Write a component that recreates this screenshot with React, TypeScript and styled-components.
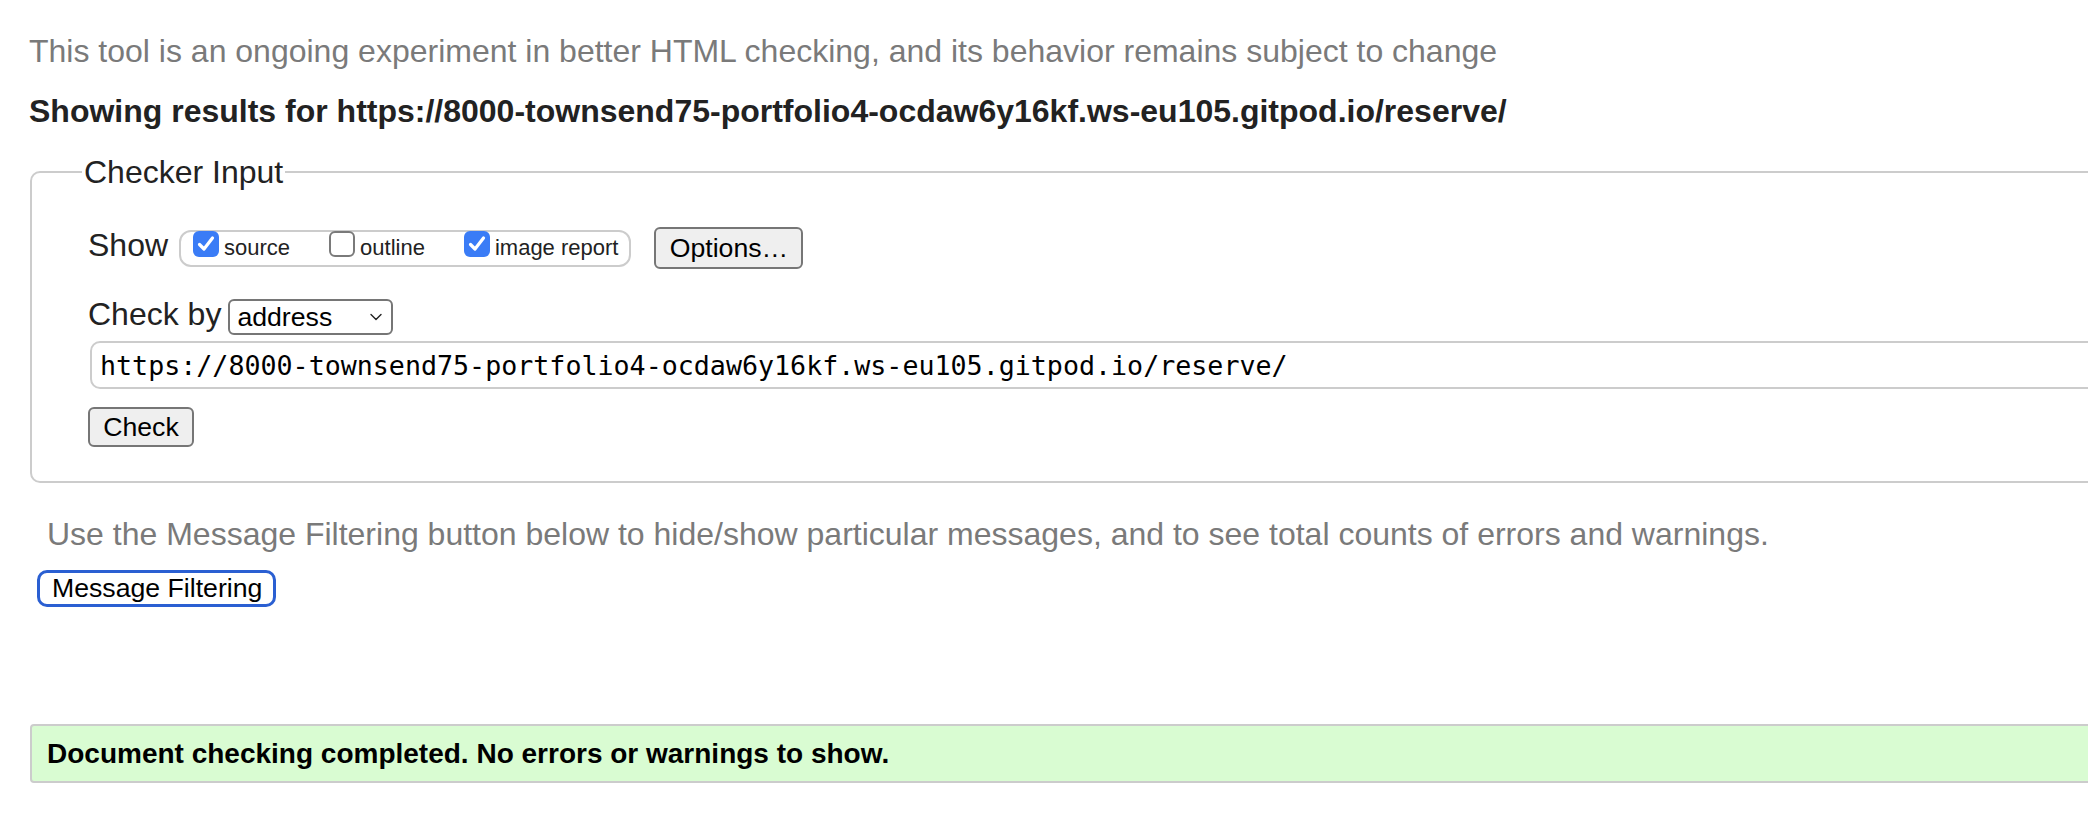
import React from "react";
import styled, { createGlobalStyle } from "styled-components";

const GlobalStyle = createGlobalStyle`
  html, body {
    margin: 0;
    padding: 0;
    overflow: hidden;
    background: #fff;
  }
  body {
    font-family: "Liberation Sans", Arial, Helvetica, sans-serif;
  }
`;

const Page = styled.div`
  width: 2400px;
  box-sizing: border-box;
  padding-left: 29px;
`;

const Intro = styled.p`
  margin: 33px 0 0;
  font-size: 32px;
  line-height: 36px;
  color: #7a7a7a;
`;

const Heading = styled.h2`
  margin: 24px 0 0;
  font-size: 32px;
  line-height: 36px;
  font-weight: bold;
  color: #222;
`;

const Fieldset = styled.fieldset`
  margin: 25px 0 0 1px;
  border: 2px solid #ccc;
  border-radius: 10px;
  padding: 37px 0 34px 56px;
  min-width: 0;
`;

const Legend = styled.legend`
  font-size: 32px;
  line-height: 36px;
  color: #222;
  padding: 0 2px;
  margin-left: -6px;
`;

const Row = styled.div<{ $top?: number }>`
  display: flex;
  align-items: flex-start;
  margin-top: ${(p) => p.$top ?? 0}px;
`;

const RowLabel = styled.span<{ $gap: number }>`
  font-size: 32px;
  line-height: 36px;
  color: #222;
  margin-right: ${(p) => p.$gap}px;
  white-space: nowrap;
`;

const CheckGroup = styled.div`
  display: flex;
  align-items: flex-start;
  gap: 39px;
  height: 37px;
  box-sizing: border-box;
  margin-top: 3px;
  border: 2px solid #ccc;
  border-radius: 12px;
  padding: 0 11px 0 12px;
`;

const CheckItem = styled.label`
  display: flex;
  align-items: flex-start;
  gap: 5px;
`;

const Box = styled.span<{ $checked: boolean }>`
  display: flex;
  align-items: center;
  justify-content: center;
  width: 26px;
  height: 26px;
  margin-top: -1px;
  box-sizing: border-box;
  border-radius: 6px;
  background: ${(p) => (p.$checked ? "#3a7cf6" : "#fff")};
  border: ${(p) => (p.$checked ? "none" : "2px solid #7a7a7a")};
`;

const CheckText = styled.span`
  font-size: 22px;
  line-height: 26px;
  margin-top: 3px;
  color: #222;
  white-space: nowrap;
`;

const Button = styled.button<{ $w: number; $h: number; $left?: number; $top?: number }>`
  width: ${(p) => p.$w}px;
  height: ${(p) => p.$h}px;
  margin-left: ${(p) => p.$left ?? 0}px;
  margin-top: ${(p) => p.$top ?? 0}px;
  box-sizing: border-box;
  padding: 0;
  background: #efefef;
  border: 2px solid #767676;
  border-radius: 6px;
  font-family: "Liberation Sans", Arial, sans-serif;
  font-size: 26.67px;
  color: #000;
  display: flex;
  align-items: center;
  justify-content: center;
`;

const SelectBox = styled.div`
  display: flex;
  align-items: center;
  justify-content: space-between;
  width: 165px;
  height: 36px;
  margin-top: 3px;
  box-sizing: border-box;
  border: 2px solid #767676;
  border-radius: 6px;
  padding: 0 9px 0 7px;
  background: #fff;
  font-size: 26.67px;
  color: #000;
`;

const UrlInput = styled.div`
  display: flex;
  align-items: center;
  height: 48px;
  margin: 6px 0 0 2px;
  box-sizing: border-box;
  border: 2px solid #ccc;
  border-radius: 10px;
  padding-left: 8px;
  font-family: "DejaVu Sans Mono", "Liberation Mono", monospace;
  font-size: 26.67px;
  color: #000;
  white-space: nowrap;
`;

const FilterNote = styled.p`
  margin: 33px 0 0 18px;
  font-size: 32px;
  line-height: 36px;
  color: #7a7a7a;
`;

const FocusButton = styled.button`
  display: flex;
  align-items: center;
  width: 239px;
  height: 37px;
  margin: 18px 0 0 8px;
  box-sizing: border-box;
  padding: 0 0 0 12px;
  background: #fff;
  border: 3px solid #2a5fd2;
  border-radius: 10px;
  font-family: "Liberation Sans", Arial, sans-serif;
  font-size: 26.67px;
  color: #000;
`;

const SuccessBox = styled.div`
  display: flex;
  align-items: center;
  height: 59px;
  margin: 117px 0 0 1px;
  box-sizing: border-box;
  border: 2px solid #ccc;
  border-radius: 4px;
  padding-left: 15px;
  background: #d9fcd2;
  font-size: 28px;
  font-weight: bold;
  color: #000;
`;

const Tick = () => (
  <svg width="20" height="20" viewBox="0 0 20 20">
    <path d="M3.5 10.5 L8 15 L16.5 4" fill="none" stroke="#fff" strokeWidth="3.2" strokeLinecap="round" strokeLinejoin="round" />
  </svg>
);

const Chevron = () => (
  <svg width="12" height="8" viewBox="0 0 12 8">
    <path d="M1 1.5 L6 6.5 L11 1.5" fill="none" stroke="#222" strokeWidth="1.4" strokeLinecap="round" strokeLinejoin="round" />
  </svg>
);

const Check = ({ checked, label }: { checked: boolean; label: string }) => (
  <CheckItem>
    <Box $checked={checked}>{checked && <Tick />}</Box>
    <CheckText>{label}</CheckText>
  </CheckItem>
);

export default function App() {
  return (
    <>
      <GlobalStyle />
      <Page>
        <Intro>This tool is an ongoing experiment in better HTML checking, and its behavior remains subject to change</Intro>
        <Heading>Showing results for https://8000-townsend75-portfolio4-ocdaw6y16kf.ws-eu105.gitpod.io/reserve/</Heading>
        <Fieldset>
          <Legend>Checker Input</Legend>
          <Row>
            <RowLabel $gap={11}>Show</RowLabel>
            <CheckGroup>
              <Check checked label="source" />
              <Check checked={false} label="outline" />
              <Check checked label="image report" />
            </CheckGroup>
            <Button $w={149} $h={42} $left={23}>Options…</Button>
          </Row>
          <Row $top={27}>
            <RowLabel $gap={7}>Check by</RowLabel>
            <SelectBox>
              <span>address</span>
              <Chevron />
            </SelectBox>
          </Row>
          <UrlInput>https://8000-townsend75-portfolio4-ocdaw6y16kf.ws-eu105.gitpod.io/reserve/</UrlInput>
          <Button $w={106} $h={40} $top={18}>Check</Button>
        </Fieldset>
        <FilterNote>Use the Message Filtering button below to hide/show particular messages, and to see total counts of errors and warnings.</FilterNote>
        <FocusButton>Message Filtering</FocusButton>
        <SuccessBox>Document checking completed. No errors or warnings to show.</SuccessBox>
      </Page>
    </>
  );
}
